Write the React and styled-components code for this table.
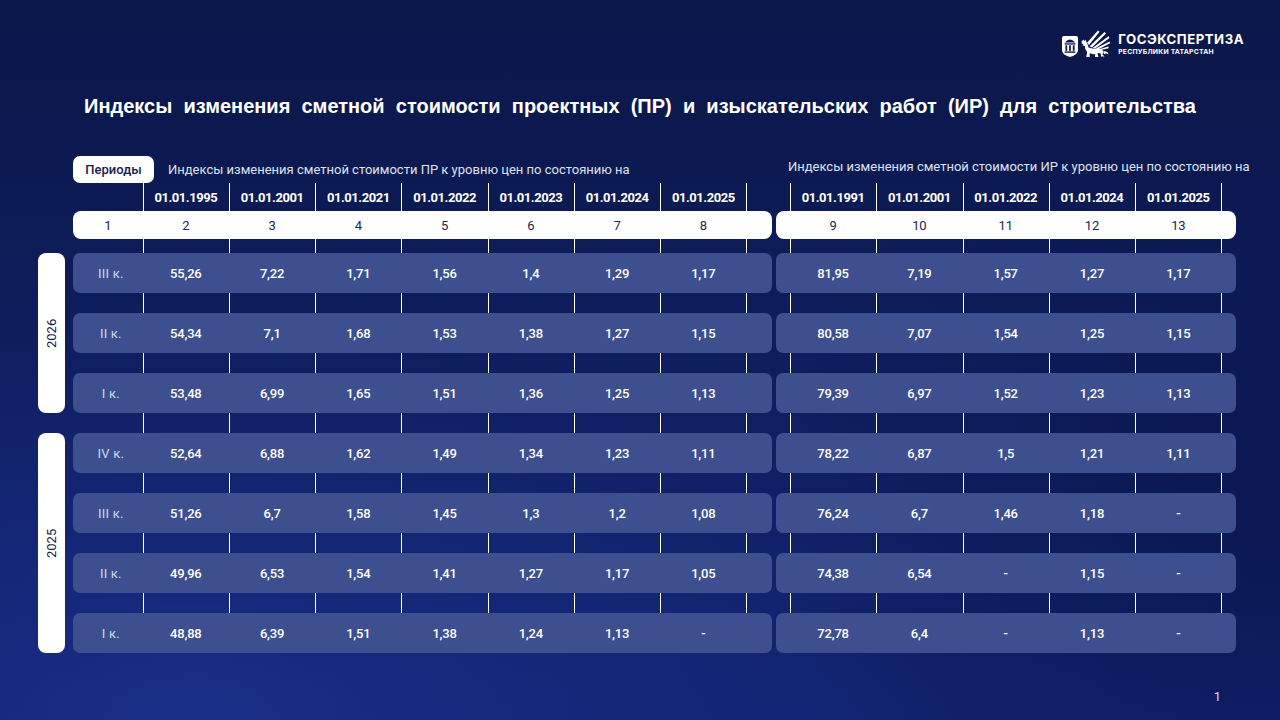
import React from "react";
import styled, { createGlobalStyle } from "styled-components";

const GlobalStyle = createGlobalStyle`
  html, body {
    margin: 0;
    padding: 0;
    background: #0c1a4f;
  }
  * { box-sizing: border-box; }
`;

const Page = styled.div`
  width: 1280px;
  height: 720px;
  overflow: hidden;
  display: flex;
  flex-direction: column;
  font-family: Roboto, "Noto Sans", sans-serif;
  color: #fff;
  background:
    radial-gradient(ellipse 60% 55% at 15% 100%, rgba(26, 48, 140, 0.8) 0%, rgba(26, 48, 140, 0) 100%),
    radial-gradient(ellipse 40% 60% at 100% 70%, rgba(8, 18, 70, 0.6) 0%, rgba(8, 18, 70, 0) 100%),
    linear-gradient(180deg, #0b1748 0%, #0e1d5c 45%, #11236f 100%);
`;

const TopBar = styled.div`
  display: flex;
  justify-content: flex-end;
  padding: 28px 36px 0 0;
`;

const Logo = styled.div`
  display: flex;
  align-items: center;
  gap: 6px;
`;

const LogoText = styled.div`
  display: flex;
  flex-direction: column;
  font-family: Inter, "Open Sans", sans-serif;
  font-weight: 700;
  line-height: 1;
`;

const LogoTitle = styled.span`
  font-size: 13.2px;
  letter-spacing: 0.5px;
`;

const LogoSub = styled.span`
  font-size: 6.8px;
  letter-spacing: 0.25px;
  margin-top: 3px;
`;

const Title = styled.h1`
  margin: 34px 0 0;
  text-align: center;
  font-family: "Liberation Sans", Arial, sans-serif;
  font-weight: 700;
  font-size: 20px;
  line-height: 24px;
  word-spacing: 5.6px;
`;

const Tables = styled.div`
  display: flex;
  align-items: flex-start;
  margin-top: 38px;
  padding-left: 38px;
`;

const YearColumn = styled.div`
  display: flex;
  flex-direction: column;
  gap: 20px;
  padding-top: 97px;
  margin-right: 8px;
`;

const YearPill = styled.div`
  width: 27px;
  height: ${(p) => p.$h}px;
  background: #fff;
  border-radius: 8px;
  display: flex;
  align-items: center;
  justify-content: center;
  color: #16214a;
  font-size: 13px;
  font-weight: 400;
  writing-mode: vertical-rl;
  transform: rotate(180deg);
`;

const TableBlock = styled.div`
  display: flex;
  flex-direction: column;
  margin-left: ${(p) => p.$offset || 0}px;
`;

const Caption = styled.div`
  height: 27px;
  display: flex;
  align-items: ${(p) => (p.$top ? "flex-start" : "center")};
  gap: 14px;
  padding-left: ${(p) => p.$indent || 0}px;
  white-space: nowrap;
`;

const PeriodTag = styled.div`
  width: 81px;
  height: 27px;
  border-radius: 7px;
  background: #fff;
  color: #16214a;
  font-size: 13px;
  font-weight: 500;
  display: flex;
  align-items: center;
  justify-content: center;
`;

const CaptionText = styled.span`
  font-size: 13px;
  color: #dde2f0;
  padding-top: ${(p) => (p.$top ? 3 : 0)}px;
`;

const Grid = styled.div`
  display: grid;
  grid-template-columns: ${(p) => p.$cols};
  grid-template-rows: 28px 28px 54px repeat(6, 60px);
`;

const Line = styled.div`
  grid-row: 1 / -1;
  grid-column: ${(p) => p.$col};
  justify-self: start;
  width: 1px;
  background: #fff;
  z-index: 0;
`;

const DateCell = styled.div`
  grid-row: 1;
  grid-column: ${(p) => p.$col};
  display: flex;
  align-items: center;
  justify-content: center;
  font-size: 13px;
  font-weight: 700;
  letter-spacing: -0.45px;
  z-index: 1;
`;

const Band = styled.div`
  grid-row: ${(p) => p.$row};
  grid-column: 1 / -1;
  display: grid;
  grid-template-columns: subgrid;
  align-self: end;
  height: ${(p) => (p.$head ? 28 : 40)}px;
  border-radius: ${(p) => (p.$head ? 8 : 7)}px;
  background: ${(p) => (p.$head ? "#ffffff" : "#3d4f8e")};
  color: ${(p) => (p.$head ? "#1a2552" : "#ffffff")};
  z-index: 1;
`;

const Cell = styled.div`
  display: flex;
  align-items: center;
  justify-content: center;
  padding-left: ${(p) => (p.$light ? 6 : 0)}px;
  font-size: 13px;
  font-weight: ${(p) => (p.$light || p.$head ? 400 : 500)};
  color: ${(p) => (p.$light ? "#d3d9ee" : "inherit")};
  letter-spacing: ${(p) => (p.$light ? "0.2px" : "-0.2px")};
  white-space: nowrap;
`;

const Footer = styled.div`
  margin-top: auto;
  padding: 0 59px 16px 0;
  text-align: right;
  font-size: 13px;
  color: #d8dcec;
`;

const leftDates = ["01.01.1995", "01.01.2001", "01.01.2021", "01.01.2022", "01.01.2023", "01.01.2024", "01.01.2025"];
const rightDates = ["01.01.1991", "01.01.2001", "01.01.2022", "01.01.2024", "01.01.2025"];

const rows = [
  { q: "III к.", pr: ["55,26", "7,22", "1,71", "1,56", "1,4", "1,29", "1,17"], ir: ["81,95", "7,19", "1,57", "1,27", "1,17"] },
  { q: "II к.", pr: ["54,34", "7,1", "1,68", "1,53", "1,38", "1,27", "1,15"], ir: ["80,58", "7,07", "1,54", "1,25", "1,15"] },
  { q: "I к.", pr: ["53,48", "6,99", "1,65", "1,51", "1,36", "1,25", "1,13"], ir: ["79,39", "6,97", "1,52", "1,23", "1,13"] },
  { q: "IV к.", pr: ["52,64", "6,88", "1,62", "1,49", "1,34", "1,23", "1,11"], ir: ["78,22", "6,87", "1,5", "1,21", "1,11"] },
  { q: "III к.", pr: ["51,26", "6,7", "1,58", "1,45", "1,3", "1,2", "1,08"], ir: ["76,24", "6,7", "1,46", "1,18", "-"] },
  { q: "II к.", pr: ["49,96", "6,53", "1,54", "1,41", "1,27", "1,17", "1,05"], ir: ["74,38", "6,54", "-", "1,15", "-"] },
  { q: "I к.", pr: ["48,88", "6,39", "1,51", "1,38", "1,24", "1,13", "-"], ir: ["72,78", "6,4", "-", "1,13", "-"] },
];

function Emblem() {
  return (
    <svg width="52" height="32" viewBox="0 0 52 32">
      {/* shield with columns */}
      <path d="M2 10 Q2 8 4 8 H16 Q18 8 18 10 V22 Q18 27 10 29 Q2 27 2 22 Z" fill="#fff" />
      <path d="M4.8 14.4 Q10 8.8 15.2 14.4 Z" fill="#0c1a4f" />
      <rect x="4.6" y="15.3" width="10.8" height="1.3" fill="#0c1a4f" />
      <rect x="5.4" y="17.3" width="1.8" height="5.5" fill="#0c1a4f" />
      <rect x="9.1" y="17.3" width="1.8" height="5.5" fill="#0c1a4f" />
      <rect x="12.8" y="17.3" width="1.8" height="5.5" fill="#0c1a4f" />
      <rect x="4.6" y="23.4" width="10.8" height="1.4" fill="#0c1a4f" />
      {/* winged leopard, facing left */}
      <path
        d="M21.5 13.5 L23.5 11.5 L24.2 13 L25.6 11.8 L26.4 14 Q28 16.5 28.5 19.5 Q32 21 36 20.5 Q40 20 42.5 22 Q44 24 42.5 26.5 L44.5 28.5 L41 28.5 L40.8 25.8 Q39.5 24.6 37.5 25.2 L38.5 29 L35 29 L35.2 26 Q31.8 26.6 29.8 25 L29.6 29 L26.2 29 L27.2 24 Q24.6 21.5 24.8 18 L22.5 17.6 L23.4 16.2 L21.8 15.6 Z"
        fill="#fff"
      />
      <path d="M27 14.8 L38 2.5 L39.6 3.8 L29 17 Z" fill="#fff" />
      <path d="M29.6 18.2 L44.5 4 L46 5.6 L32 19.6 Z" fill="#fff" />
      <path d="M32.6 20 L48.5 8.2 L49.5 10 L35.2 20.6 Z" fill="#fff" />
      <path d="M35.8 20.6 L49.5 13.4 L50 15.3 L38.6 21.2 Z" fill="#fff" />
      <path d="M39 21.2 L48.5 18.4 L48.6 20.2 L41 22 Z" fill="#fff" />
      <path d="M43 23.5 Q47.5 22.5 48.5 26.5 Q47 25 44 26 Z" fill="#fff" />
    </svg>
  );
}

function PriceTable({ cols, dates, lineCols, headNums, firstLabel, valueKey }) {
  return (
    <Grid $cols={cols}>
      {lineCols.map((c) => (
        <Line key={"l" + c} $col={c} />
      ))}
      {dates.map((d, i) => (
        <DateCell key={d + i} $col={2 + i}>
          {d}
        </DateCell>
      ))}
      <Band $row={2} $head>
        <Cell $head>{firstLabel}</Cell>
        {headNums.map((n) => (
          <Cell key={n} $head>
            {n}
          </Cell>
        ))}
      </Band>
      {rows.map((r, i) => (
        <Band key={i} $row={i + 3}>
          {valueKey === "pr" ? <Cell $light>{r.q}</Cell> : <Cell />}
          {r[valueKey].map((v, j) => (
            <Cell key={j}>{v}</Cell>
          ))}
        </Band>
      ))}
    </Grid>
  );
}

export default function App() {
  return (
    <>
      <GlobalStyle />
      <Page>
        <TopBar>
          <Logo>
            <Emblem />
            <LogoText>
              <LogoTitle>ГОСЭКСПЕРТИЗА</LogoTitle>
              <LogoSub>РЕСПУБЛИКИ ТАТАРСТАН</LogoSub>
            </LogoText>
          </Logo>
        </TopBar>

        <Title>
          Индексы изменения сметной стоимости проектных (ПР) и изыскательских работ (ИР) для строительства
        </Title>

        <Tables>
          <YearColumn>
            <YearPill $h={160}>2026</YearPill>
            <YearPill $h={220}>2025</YearPill>
          </YearColumn>

          <TableBlock>
            <Caption>
              <PeriodTag>Периоды</PeriodTag>
              <CaptionText>Индексы изменения сметной стоимости ПР к уровню цен по состоянию на</CaptionText>
            </Caption>
            <PriceTable
              cols="69.7px repeat(7, 86.26px) 25.5px"
              dates={leftDates}
              lineCols={[2, 3, 4, 5, 6, 7, 8, 9]}
              firstLabel="1"
              headNums={["2", "3", "4", "5", "6", "7", "8"]}
              valueKey="pr"
            />
          </TableBlock>

          <TableBlock $offset={4}>
            <Caption $top $indent={12}>
              <CaptionText $top>Индексы изменения сметной стоимости ИР к уровню цен по состоянию на</CaptionText>
            </Caption>
            <PriceTable
              cols="14px repeat(5, 86.3px) 14.5px"
              dates={rightDates}
              lineCols={[2, 3, 4, 5, 6, 7]}
              firstLabel=""
              headNums={["9", "10", "11", "12", "13"]}
              valueKey="ir"
            />
          </TableBlock>
        </Tables>

        <Footer>1</Footer>
      </Page>
    </>
  );
}
